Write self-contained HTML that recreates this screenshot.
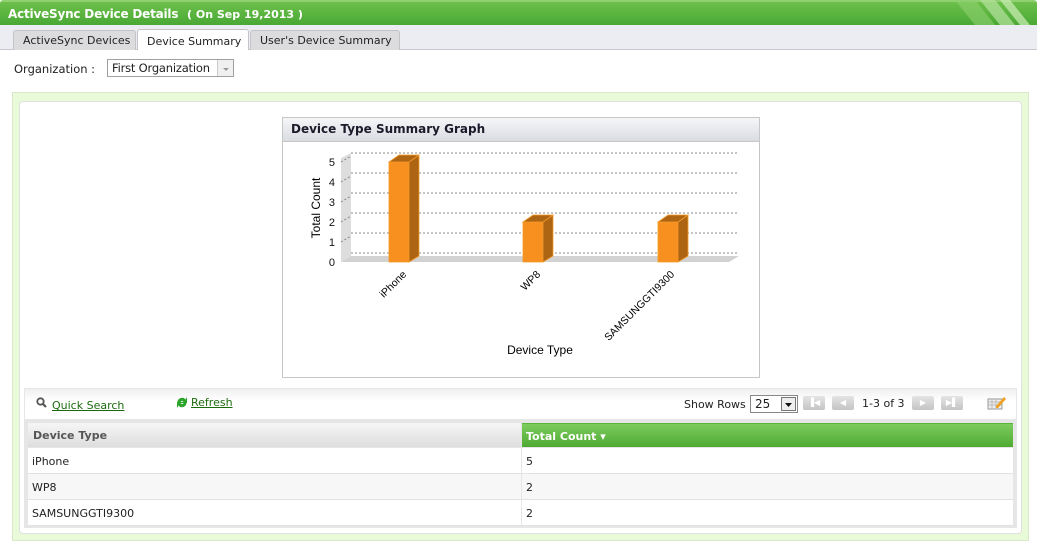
<!DOCTYPE html>
<html><head><meta charset="utf-8"><style>
*{margin:0;padding:0;box-sizing:border-box}
body{width:1037px;height:551px;background:#fff;font-family:"DejaVu Sans",Verdana,sans-serif;font-size:11px;color:#222;position:relative;overflow:hidden}
.abs{position:absolute}
.hdr{left:0;top:0;width:1037px;height:25px;background:linear-gradient(#6cc04a,#4aa835);border-top:2px solid #8fd070;border-radius:3px 3px 0 0}
.hdr .t{left:8px;top:5px;color:#fff;font-weight:bold;font-size:12px;letter-spacing:-0.2px}
.hdr .d{left:187px;top:6px;color:#fff;font-weight:bold;font-size:11px;font-family:"DejaVu Sans",sans-serif}
.tabs{left:0;top:25px;width:1037px;height:25px;background:#ecedf3;border-bottom:1px solid #c8c8cc}
.tab{top:5px;height:20px;background:#dcdcdf;border:1px solid #c4c4c8;border-bottom:none;border-radius:3px 3px 0 0;font-size:11px;padding:3px 0 0 9px}
.tab.on{background:#fff;height:21px;top:4px;padding-top:5px}
.sel{left:107px;top:59px;width:127px;height:18px;border:1px solid #a0a0a0;font-size:11.5px;padding:1px 0 0 4px;letter-spacing:-0.2px}
.sel b{position:absolute;right:0;top:0;width:16px;height:16px;border-left:1px solid #ccc;background:#f0f0f0}
.green{left:12px;top:92px;width:1017px;height:449px;background:#e9fad9;border:1px solid #d8e8cc}
.inner{left:19px;top:101px;width:1003px;height:433px;background:#fff;border:1px solid #e0e0e0;border-radius:4px}
.chart{left:282px;top:117px;width:478px;height:261px;border:1px solid #c6c6c6;background:#fff}
.chart .h{height:24px;background:linear-gradient(#f5f6f8,#d9dce2);border-bottom:1px solid #c6c6c6;font-weight:bold;font-size:12px;color:#1a1a2a;padding:4px 0 0 8px}
.tb{left:24px;top:388px;width:993px;height:140px;background:#e6e6e6}
.tool{left:25px;top:389px;width:991px;height:30px;background:linear-gradient(#f0f0f0,#fff 40%)}
a{color:#1b6b0e;text-decoration:underline}
.th1{left:28px;top:423px;width:493px;height:24px;background:linear-gradient(#f6f6f6,#dedede);font-weight:bold;color:#555;padding:6px 0 0 5px}
.th2{left:522px;top:423px;width:491px;height:24px;background:linear-gradient(#7ccc5e,#4faa31);font-weight:bold;color:#fff;padding:6px 0 0 4px;border-top:1px solid #5ab43c}
.row{left:28px;width:985px;height:26px;border-bottom:1px solid #e2e2e2}
.row span{position:absolute;top:7px}
.btn{top:396px;width:22px;height:14px;background:linear-gradient(#e4e4e4,#c4c4c4);border-radius:2px;color:#fff;font-size:8px;text-align:center;line-height:14px}
</style></head><body>
<div class="abs hdr"><div class="abs t">ActiveSync Device Details</div><div class="abs d">( On Sep 19,2013 )</div>
<svg class="abs" style="left:950px;top:-2px" width="87" height="25"><polygon points="5,0 25,0 45,25 25,25" fill="#8dd070" opacity=".6"/><polygon points="30,0 45,0 65,25 50,25" fill="#b7e3a0" opacity=".7"/><polygon points="50,0 60,0 80,25 70,25" fill="#cdeeb8" opacity=".7"/></svg></div>
<div class="abs tabs">
<div class="abs tab" style="left:13px;width:123px">ActiveSync Devices</div>
<div class="abs tab on" style="left:137px;width:112px">Device Summary</div>
<div class="abs tab" style="left:250px;width:150px">User's Device Summary</div>
</div>
<div class="abs" style="left:14px;top:62px;font-size:11.5px">Organization :</div>
<div class="abs sel">First Organization<b><svg width="16" height="16"><path d="M5 8h6l-3 3z" fill="#999"/></svg></b></div>
<div class="abs green"></div>
<div class="abs inner"></div>
<div class="abs chart"><div class="h">Device Type Summary Graph</div>
<svg width="478" height="236" style="position:absolute;left:0;top:22px;font-family:'Liberation Sans',Arial,sans-serif">
<polygon points="58,18 68,13 68,116 58,122" fill="#ddd"/>
<polygon points="58,122 68,116 456,116 446,122" fill="#d2d2d2"/>
<g stroke="#888" stroke-dasharray="2,2" stroke-width="1">
<line x1="68" y1="13" x2="456" y2="13"/><line x1="68" y1="33" x2="456" y2="33"/><line x1="68" y1="53" x2="456" y2="53"/><line x1="68" y1="73" x2="456" y2="73"/><line x1="68" y1="93" x2="456" y2="93"/><line x1="68" y1="113" x2="456" y2="113"/>
<line x1="58" y1="22" x2="68" y2="16"/><line x1="58" y1="42" x2="68" y2="36"/><line x1="58" y1="62" x2="68" y2="56"/><line x1="58" y1="82" x2="68" y2="76"/><line x1="58" y1="102" x2="68" y2="96"/></g>
<g font-size="11" fill="#111" text-anchor="end">
<text x="52" y="126">0</text><text x="52" y="106">1</text><text x="52" y="86">2</text><text x="52" y="66">3</text><text x="52" y="46">4</text><text x="52" y="26">5</text></g>
<text transform="translate(37,68) rotate(-90)" font-size="12" text-anchor="middle">Total Count</text>
<g stroke="#f39a2a" stroke-width=".8">
<polygon points="106,22 126,22 126,122 106,122" fill="#f7901e"/><polygon points="126,22 136,15 136,116 126,122" fill="#ad6514"/><polygon points="106,22 116,15 136,15 126,22" fill="#ad6514"/>
<polygon points="240,82 260,82 260,122 240,122" fill="#f7901e"/><polygon points="260,82 270,75 270,116 260,122" fill="#ad6514"/><polygon points="240,82 250,75 270,75 260,82" fill="#ad6514"/>
<polygon points="375,82 395,82 395,122 375,122" fill="#f7901e"/><polygon points="395,82 405,75 405,116 395,122" fill="#ad6514"/><polygon points="375,82 385,75 405,75 395,82" fill="#ad6514"/></g>
<g font-size="10.5" text-anchor="end">
<text transform="translate(124,135) rotate(-45)">iPhone</text>
<text transform="translate(258,135) rotate(-45)">WP8</text>
<text transform="translate(392,135) rotate(-45)">SAMSUNGGTI9300</text></g>
<text x="257" y="214" font-size="12" text-anchor="middle">Device Type</text>
</svg></div>
<div class="abs tb"></div>
<div class="abs tool"></div>
<svg class="abs" style="left:36px;top:397px" width="12" height="12"><circle cx="4.5" cy="4.5" r="3.2" fill="none" stroke="#555" stroke-width="1.8"/><line x1="7" y1="7" x2="10" y2="10" stroke="#555" stroke-width="2.2"/></svg>
<a class="abs" style="left:52px;top:399px">Quick Search</a>
<svg class="abs" style="left:176px;top:395px" width="12" height="15"><path d="M1.5 7.5a4.5 4.5 0 0 1 8-3l1.5-2.5v6H5l2.5-2A2.8 2.8 0 0 0 4 7.5z" fill="#2aa52a"/><path d="M10.5 7.5a4.5 4.5 0 0 1-8 3L1 13V7h6l-2.5 2A2.8 2.8 0 0 0 8 7.5z" fill="#2aa52a"/></svg>
<a class="abs" style="left:191px;top:396px">Refresh</a>
<div class="abs" style="left:684px;top:398px">Show Rows</div>
<div class="abs" style="left:750px;top:395px;width:48px;height:18px;border:1px solid #888;background:#fff;font-size:12px;padding:1px 0 0 4px">25<span style="position:absolute;right:1px;top:1px;width:15px;height:14px;border:1px solid #777;background:#eee"><svg width="13" height="12"><path d="M3 5h7l-3.5 4z" fill="#111"/></svg></span></div>
<div class="abs btn" style="left:803px">▐◀</div>
<div class="abs btn" style="left:832px">◀</div>
<div class="abs" style="left:862px;top:397px">1-3 of 3</div>
<div class="abs btn" style="left:912px">▶</div>
<div class="abs btn" style="left:941px">▶▌</div>
<svg class="abs" style="left:987px;top:396px" width="20" height="14"><rect x="1" y="3" width="14" height="10" fill="#eee" stroke="#999"/><path d="M1 6h14M1 9h14M5 3v10M9 3v10" stroke="#bbb"/><path d="M9 10l8-9 2 2-8 9h-2z" fill="#f0a020"/></svg>
<div class="abs th1">Device Type</div>
<div class="abs th2">Total Count ▾</div>
<div class="abs row" style="top:448px;background:#fff"><span style="left:4px">iPhone</span><span style="left:498px">5</span></div>
<div class="abs row" style="top:474px;background:#f7f7f7"><span style="left:4px">WP8</span><span style="left:498px">2</span></div>
<div class="abs row" style="top:500px;background:#fff"><span style="left:4px">SAMSUNGGTI9300</span><span style="left:498px">2</span></div>
<div class="abs" style="left:521px;top:448px;width:1px;height:77px;background:#e6e6e6"></div>
</body></html>
